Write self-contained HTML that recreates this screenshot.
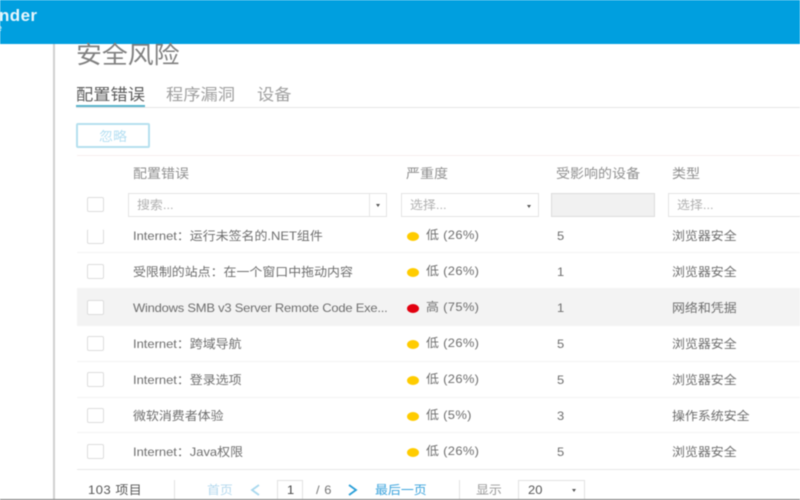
<!DOCTYPE html>
<html><head><meta charset="utf-8"><style>
html,body{margin:0;padding:0;background:#fff}
body{width:800px;height:500px;overflow:hidden;position:relative;font-family:"Liberation Sans","Noto Sans CJK SC",sans-serif;color:#6e6e6e}
#w{position:absolute;left:0;top:0;width:800px;height:500px;overflow:hidden;filter:blur(.5px)}
#w div{position:absolute;white-space:nowrap}
.t,.p,.h,.k{transform:scaleX(1.078);transform-origin:left center}
.t{font-size:12px;line-height:14px;margin-top:1px}
.s{letter-spacing:.3px}
.h{font-size:13px;line-height:14px;top:167px;color:#909090}
.k{font-size:16px;line-height:18px;top:87px;color:#a0a0a0}
.b{width:15px;height:13px;border:1px solid #ddd;border-radius:2px;background:#fff;left:87px}
.d{width:12px;height:9px;border-radius:50%;left:407px;background:#fc0}
.l{left:77px;width:723px;height:1px;background:#f3f3f3}
.i{border:1px solid #e4e4e4;height:22px;top:193px;background:#fff;box-sizing:content-box}
.a{width:0;height:0;border-left:2.5px solid transparent;border-right:2.5px solid transparent;border-top:3px solid #555}
.p{color:#b0b0b0;font-size:12px;line-height:14px;top:198px}
</style></head><body><div id="w">
<div style="left:0;top:0;width:800px;height:44px;background:#009fdf"></div>
<div style="left:-1px;top:7px;font-size:17px;font-weight:bold;color:#e8f6fc;line-height:18px;letter-spacing:.4px">nder</div>
<div style="left:-3px;top:23px;font-size:9px;color:#d5eef9;line-height:10px">e</div>
<div style="left:53px;top:44px;width:2px;height:456px;background:#d0d0d0"></div>
<div class="k" style="left:76px;top:44px;font-size:24px;line-height:24px;color:#808080">安全风险</div>
<div class="k" style="left:76px;color:#5c5c5c">配置错误</div>
<div class="k" style="left:166px">程序漏洞</div>
<div class="k" style="left:257px">设备</div>
<div style="left:76px;top:107px;width:724px;height:1px;background:#e6e6e6"></div>
<div style="left:76px;top:105px;width:69px;height:2px;background:#5ab4cc"></div>
<div style="left:76px;top:123px;width:70px;height:21px;border:2px solid #b5e0ee;border-radius:2px"></div>
<div class="h" style="left:99px;top:130px;color:#b5dff2">忽略</div>
<div style="left:77px;top:155px;width:723px;height:1px;background:#f7eeee"></div>

<div class="h" style="left:133px">配置错误</div>
<div class="h" style="left:406px">严重度</div>
<div class="h" style="left:556px">受影响的设备</div>
<div class="h" style="left:672px">类型</div>

<div class="b" style="top:197px"></div>
<div class="i" style="left:128px;width:257px"></div>
<div style="left:369px;top:194px;width:1px;height:22px;background:#e6e6e6"></div>
<div class="a" style="left:376px;top:204px"></div>
<div class="p" style="left:137px">搜索...</div>
<div class="i" style="left:401px;width:136px"></div>
<div class="a" style="left:527px;top:205px"></div>
<div class="p" style="left:410px">选择...</div>
<div class="i" style="left:551px;width:102px;background:#f1f1f1;border-color:#ddd"></div>
<div class="i" style="left:668px;width:140px"></div>
<div class="p" style="left:677px">选择...</div>

<div style="left:77px;top:289px;width:723px;height:36px;background:#f3f3f3"></div>
<div class="l" style="top:252px"></div>
<div class="l" style="top:288px"></div>
<div class="l" style="top:325px"></div>
<div class="l" style="top:361px"></div>
<div class="l" style="top:397px"></div>
<div class="l" style="top:432px"></div>
<div style="left:77px;top:469px;width:723px;height:1px;background:#e8e8e8"></div>

<div class="b" style="top:229px;border-top-color:transparent"></div>
<div class="t" style="left:133px;top:228px">Internet：运行未签名的.NET组件</div>
<div class="d" style="top:232px"></div><div class="t s" style="left:426px;top:227px">低 (26%)</div>
<div class="t" style="left:557px;top:228px">5</div><div class="t" style="left:672px;top:228px">浏览器安全</div>

<div class="b" style="top:264px"></div>
<div class="t" style="left:133px;top:264px">受限制的站点：在一个窗口中拖动内容</div>
<div class="d" style="top:268px"></div><div class="t s" style="left:426px;top:263px">低 (26%)</div>
<div class="t" style="left:557px;top:264px">1</div><div class="t" style="left:672px;top:264px">浏览器安全</div>

<div class="b" style="top:300px"></div>
<div class="t" style="left:133px;top:300px;letter-spacing:-.2px">Windows SMB v3 Server Remote Code Exe...</div>
<div class="d" style="top:304px;background:#e2000f"></div><div class="t s" style="left:426px;top:299px">高 (75%)</div>
<div class="t" style="left:557px;top:300px">1</div><div class="t" style="left:672px;top:300px">网络和凭据</div>

<div class="b" style="top:336px"></div>
<div class="t" style="left:133px;top:336px">Internet：跨域导航</div>
<div class="d" style="top:340px"></div><div class="t s" style="left:426px;top:335px">低 (26%)</div>
<div class="t" style="left:557px;top:336px">5</div><div class="t" style="left:672px;top:336px">浏览器安全</div>

<div class="b" style="top:372px"></div>
<div class="t" style="left:133px;top:372px">Internet：登录选项</div>
<div class="d" style="top:376px"></div><div class="t s" style="left:426px;top:371px">低 (26%)</div>
<div class="t" style="left:557px;top:372px">5</div><div class="t" style="left:672px;top:372px">浏览器安全</div>

<div class="b" style="top:408px"></div>
<div class="t" style="left:133px;top:408px">微软消费者体验</div>
<div class="d" style="top:412px"></div><div class="t s" style="left:426px;top:407px">低 (5%)</div>
<div class="t" style="left:557px;top:408px">3</div><div class="t" style="left:672px;top:408px">操作系统安全</div>

<div class="b" style="top:444px"></div>
<div class="t" style="left:133px;top:444px">Internet：Java权限</div>
<div class="d" style="top:448px"></div><div class="t s" style="left:426px;top:443px">低 (26%)</div>
<div class="t" style="left:557px;top:444px">5</div><div class="t" style="left:672px;top:444px">浏览器安全</div>

<div class="t" style="left:88px;top:482px;color:#555;letter-spacing:.5px">103 项目</div>
<div style="left:174px;top:480px;width:1px;height:20px;background:#e2e2e2"></div>
<div class="t" style="left:207px;top:482px;color:#b5d9ee">首页</div>
<svg style="position:absolute;left:250px;top:483px" width="12" height="14" viewBox="0 0 12 14"><path d="M9 2 L2 7 L9 12" fill="none" stroke="#a8d8ee" stroke-width="1.8"/></svg>
<div style="left:277px;top:480px;width:26px;height:20px;border:1px solid #e2e2e2;box-sizing:border-box"></div>
<div class="t" style="left:287px;top:482px;color:#444">1</div>
<div class="t" style="left:316px;top:482px;color:#777;letter-spacing:.5px">/ 6</div>
<svg style="position:absolute;left:347px;top:483px" width="12" height="14" viewBox="0 0 12 14"><path d="M2 2 L9 7 L2 12" fill="none" stroke="#2a9fd8" stroke-width="1.8"/></svg>
<div class="t" style="left:375px;top:482px;color:#3ba3dc">最后一页</div>
<div style="left:459px;top:480px;width:1px;height:20px;background:#e2e2e2"></div>
<div class="t" style="left:476px;top:482px;color:#999">显示</div>
<div style="left:518px;top:480px;width:67px;height:20px;border:1px solid #e2e2e2;box-sizing:border-box"></div>
<div class="t" style="left:528px;top:482px;color:#555">20</div>
<div class="a" style="left:572px;top:489px"></div>
<div style="left:0;top:499px;width:800px;height:1px;background:#777"></div>
</div></body></html>
